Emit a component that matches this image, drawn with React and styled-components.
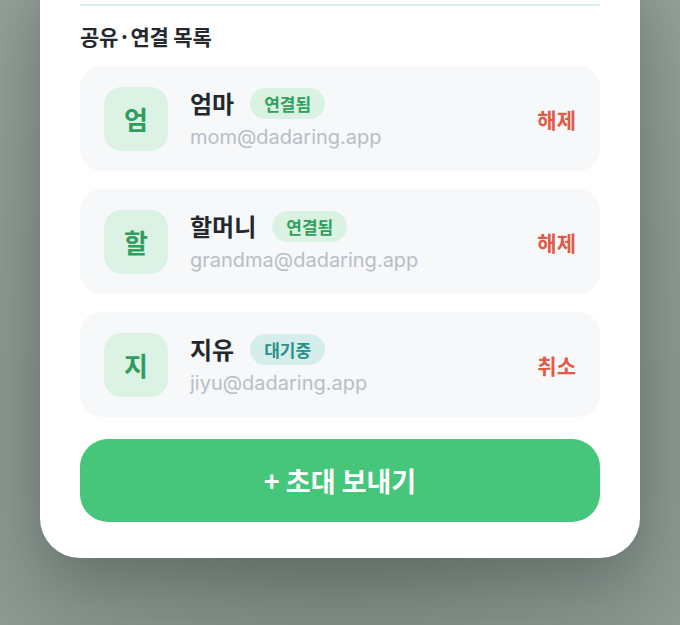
import React from "react";
import styled, { createGlobalStyle } from "styled-components";

const GlobalStyle = createGlobalStyle`
  html, body {
    margin: 0;
    padding: 0;
    height: 100%;
    overflow: hidden;
    background: #8a968f;
    font-family: Inter, "Noto Sans CJK KR", sans-serif;
  }
`;

const Page = styled.div`
  min-height: 625px;
  padding: 0 40px;
  background: radial-gradient(ellipse at 50% 70%, #77837c 0%, #86928b 55%, #939f98 100%);
  overflow: hidden;
`;

const Sheet = styled.div`
  margin-top: -27px;
  background: #ffffff;
  border-radius: 0 0 40px 40px;
  padding: 30px 40px 36px;
  box-shadow: 0 24px 60px rgba(40, 55, 48, 0.35);
`;

const Divider = styled.div`
  height: 2px;
  margin-top: 1px;
  background: #d9eee7;
`;

const Title = styled.h2`
  margin: 15px 0 0;
  font-family: "Noto Sans CJK KR", sans-serif;
  font-size: 21px;
  font-weight: 700;
  color: #25292e;
  line-height: 30px;
  letter-spacing: -0.2px;
`;

const List = styled.div`
  display: flex;
  flex-direction: column;
  gap: 18px;
  margin-top: 15px;
`;

const Row = styled.div`
  display: flex;
  align-items: center;
  height: 105px;
  box-sizing: border-box;
  padding: 0 24px;
  background: #f6f8fa;
  border-radius: 22px;
`;

const Avatar = styled.div`
  width: 64px;
  height: 64px;
  border-radius: 18px;
  background: #dcf2e5;
  color: #2f9e5c;
  display: flex;
  align-items: center;
  justify-content: center;
  font-family: "Noto Sans CJK KR", sans-serif;
  font-weight: 700;
  font-size: 26px;
  flex-shrink: 0;
`;

const Info = styled.div`
  flex: 1;
  margin-left: 22px;
  display: flex;
  flex-direction: column;
  gap: 5px;
`;

const NameLine = styled.div`
  display: flex;
  align-items: center;
  gap: 16px;
`;

const Name = styled.span`
  font-family: "Noto Sans CJK KR", sans-serif;
  font-size: 24px;
  font-weight: 700;
  color: #24282c;
  line-height: 32px;
`;

const Badge = styled.span`
  font-family: "Noto Sans CJK KR", sans-serif;
  font-size: 17px;
  font-weight: 700;
  line-height: 31px;
  height: 31px;
  padding: 0 14px;
  border-radius: 16px;
  background: ${(p) => (p.$pending ? "#d6eeeb" : "#d9f2e2")};
  color: ${(p) => (p.$pending ? "#2a9189" : "#2fa05d")};
`;

const Email = styled.span`
  font-size: 20px;
  color: #b8bec6;
  line-height: 26px;
`;

const Action = styled.button`
  border: none;
  background: none;
  padding: 0;
  font-family: "Noto Sans CJK KR", sans-serif;
  font-size: 21px;
  font-weight: 700;
  color: #e05a48;
  cursor: pointer;
`;

const InviteButton = styled.button`
  width: 100%;
  height: 83px;
  margin-top: 22px;
  border: none;
  border-radius: 28px;
  background: #45c67a;
  color: #ffffff;
  font-family: "Noto Sans CJK KR", sans-serif;
  font-size: 27px;
  font-weight: 700;
  cursor: pointer;
`;

const members = [
  { initial: "엄", name: "엄마", email: "mom@dadaring.app", status: "연결됨", action: "해제" },
  { initial: "할", name: "할머니", email: "grandma@dadaring.app", status: "연결됨", action: "해제" },
  { initial: "지", name: "지유", email: "jiyu@dadaring.app", status: "대기중", action: "취소", pending: true },
];

const App = () => {
  return (
    <>
      <GlobalStyle />
      <Page>
        <Sheet>
          <Divider />
          <Title>공유·연결 목록</Title>
          <List>
            {members.map((each) => (
              <Row key={each.email}>
                <Avatar>{each.initial}</Avatar>
                <Info>
                  <NameLine>
                    <Name>{each.name}</Name>
                    <Badge $pending={each.pending}>{each.status}</Badge>
                  </NameLine>
                  <Email>{each.email}</Email>
                </Info>
                <Action>{each.action}</Action>
              </Row>
            ))}
          </List>
          <InviteButton>+ 초대 보내기</InviteButton>
        </Sheet>
      </Page>
    </>
  );
};

export default App;
